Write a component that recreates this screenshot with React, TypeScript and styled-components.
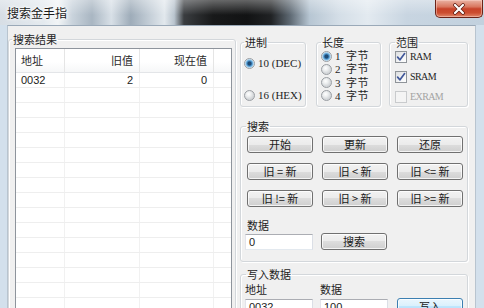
import React from "react";
import styled, { createGlobalStyle, css } from "styled-components";

const CJK = `"Noto Sans CJK SC", "Noto Sans", sans-serif`;
const LATIN_SERIF = `"Liberation Serif", "Noto Sans CJK SC", serif`;
const LATIN_SANS = `"Liberation Sans", "Noto Sans CJK SC", sans-serif`;

const Global = createGlobalStyle`
  html, body { margin: 0; padding: 0; background: #ffffff; }
  body { width: 484px; height: 308px; overflow: hidden; font-family: ${CJK}; }
  * { box-sizing: border-box; }
`;

const Window = styled.div`
  width: 484px;
  height: 308px;
  display: flex;
  flex-direction: column;
  overflow: hidden;
  background: #d3e0ec;
`;

const TitleBar = styled.div`
  height: 25px;
  flex: none;
  display: flex;
  align-items: flex-start;
  justify-content: space-between;
  padding-left: 7px;
  background:
    linear-gradient(180deg, rgba(255,255,255,0.35) 0%, rgba(255,255,255,0) 60%),
    linear-gradient(90deg,
      #d7dee5 0%, #e4eaef 9%, #f1f4f6 12%, #c9d3dc 15%, #a9b6c2 19%,
      #d8e0e7 23%, #9eacb9 27%, #c5cfd8 31%, #e2e8ed 34%, #b9c4ce 36%,
      #3a3d40 38%, #18191a 44%, #121314 51%, #202224 56%, #5f6a74 60%,
      #b7c6d3 64%, #d4dee7 70%, #e3eaf0 76%, #c8d5e1 84%, #c2d1de 100%);
`;

const Title = styled.div`
  font: 12px/12px ${CJK};
  height: 12px;
  color: #1a1a1a;
  margin-top: 7px;
  text-shadow: 0 0 5px #ffffff, 0 0 3px #ffffff, 0 0 2px #ffffff;
`;

const CloseButton = styled.div`
  width: 48px;
  height: 18px;
  margin-right: 1px;
  border: 1px solid #6b2318;
  border-top: none;
  border-radius: 0 0 5px 5px;
  background: linear-gradient(180deg, #eab3a4 0%, #d9775f 40%, #c7432a 52%, #cc4d30 75%, #e0876a 100%);
  box-shadow: inset 0 0 0 1px rgba(255, 220, 210, 0.45);
  display: flex;
  align-items: center;
  justify-content: center;
`;

const Frame = styled.div`
  flex: 1;
  min-height: 0;
  display: flex;
  padding: 0 8px 0 7px;
`;

const Client = styled.div`
  flex: 1;
  min-height: 0;
  background: #f0f0f0;
  border-top: 1px solid #9aa9b8;
  border-left: 1px solid #b8c4cf;
  border-right: 1px solid #b8c4cf;
  display: grid;
  grid-template-columns: 228px 228px;
  column-gap: 4px;
  align-items: start;
  padding: 7px 7px 0 0;
  overflow: hidden;
`;

const Group = styled.fieldset`
  margin: 0;
  min-width: 0;
  border: 1px solid #d3d7db;
  border-radius: 3px;
  box-shadow: inset 1px 1px 0 #ffffff, 1px 1px 0 #ffffff;
  padding: 0 4px 0 4px;
`;

const Legend = styled.legend<{ $shift?: number }>`
  font: 11px/12px ${CJK};
  height: 12px;
  color: #1e1e1e;
  padding: 0 1px;
  margin-left: ${(p) => p.$shift ?? 1}px;
`;

/* ---------- left: list view ---------- */

const ResultGroup = styled(Group)`
  height: 300px;
  padding: 3px 4px 0 6px;
`;

const ListView = styled.div`
  width: 217px;
  height: 270px;
  background: #ffffff;
  border: 1px solid #8e949c;
  display: flex;
  flex-direction: column;
  overflow: hidden;
`;

const COLS = "49px 75px 74px 1fr";

const HeaderRow = styled.div`
  height: 24px;
  flex: none;
  display: grid;
  grid-template-columns: ${COLS};
  background: linear-gradient(180deg, #ffffff 0%, #ffffff 55%, #f6f7f8 100%);
  border-bottom: 1px solid #e3e5e8;
`;

const HeaderCell = styled.div<{ $right?: boolean }>`
  font: 11px/23px ${CJK};
  color: #2b2b2b;
  border-right: 1px solid #e5e5e5;
  padding: 0 ${(p) => (p.$right ? "6px" : "0")} 0 ${(p) => (p.$right ? "0" : "5px")};
  text-align: ${(p) => (p.$right ? "right" : "left")};
  &:last-child { border-right: none; }
`;

const Row = styled.div`
  height: 15px;
  flex: none;
  display: grid;
  grid-template-columns: ${COLS};
  border-bottom: 1px solid #eeeeee;
`;

const Cell = styled.div<{ $right?: boolean }>`
  font: 11px/14px ${LATIN_SANS};
  color: #1c1c1c;
  border-right: 1px solid #f1f1f1;
  text-align: ${(p) => (p.$right ? "right" : "left")};
  padding: 0 ${(p) => (p.$right ? "6px" : "0")} 0 ${(p) => (p.$right ? "0" : "5px")};
  &:last-child { border-right: none; }
`;

/* ---------- right column ---------- */

const RightColumn = styled.div`
  display: flex;
  flex-direction: column;
  padding-top: 3px;
`;

const TopRow = styled.div`
  display: flex;
  align-items: stretch;
  height: 71px;
`;

const SmallGroup = styled(Group)<{ $w: number; $gap: number; $pl: number }>`
  width: ${(p) => p.$w}px;
  margin-right: ${(p) => p.$gap}px;
  padding: 0 2px 0 ${(p) => p.$pl}px;
  display: flex;
  flex-direction: column;
`;

const OptionList = styled.div<{ $gap: number; $top: number }>`
  display: flex;
  flex-direction: column;
  gap: ${(p) => p.$gap}px;
  padding-top: ${(p) => p.$top}px;
`;

const OptionRow = styled.div<{ $disabled?: boolean }>`
  display: flex;
  align-items: center;
  gap: 3px;
  height: 12px;
  color: ${(p) => (p.$disabled ? "#a3a3a3" : "#1e1e1e")};
`;

const RadioCircle = styled.span<{ $on?: boolean }>`
  width: 11px;
  height: 11px;
  flex: none;
  border-radius: 50%;
  border: 1px solid #9a9ea3;
  background: ${(p) =>
    p.$on
      ? "radial-gradient(circle at 50% 50%, #1f4b74 0 1.6px, #3f86bf 2.4px, #8cc4ea 3.6px, #e6eef4 4.6px)"
      : "radial-gradient(circle at 40% 35%, #ffffff 0, #eceeef 2.5px, #d3d6d9 5px)"};
`;

const CheckBox = styled.span<{ $disabled?: boolean }>`
  width: 12px;
  height: 12px;
  flex: none;
  display: flex;
  align-items: center;
  justify-content: center;
  border: 1px solid ${(p) => (p.$disabled ? "#c9cbcd" : "#8f9499")};
  background: ${(p) =>
    p.$disabled ? "#f4f4f4" : "linear-gradient(135deg, #dcdee0 0%, #f3f4f5 60%, #ffffff 100%)"};
`;

const SerifLabel = styled.span<{ $tight?: boolean }>`
  display: block;
  height: 12px;
  font: 11px/12px ${LATIN_SERIF};
  white-space: nowrap;
  ${(p) => p.$tight && css`font-size: 10px; letter-spacing: -0.6px;`}
`;

const NumLabel = styled.span`
  display: block;
  height: 12px;
  font: 11px/12px ${LATIN_SERIF};
  width: 8px;
`;

const CjkLabel = styled.span`
  display: block;
  height: 12px;
  font: 11px/12px ${LATIN_SERIF};
  letter-spacing: 0.5px;
  white-space: nowrap;
`;

const SearchGroup = styled(Group)`
  margin-top: 13px;
  padding: 4px 4px 11px 4px;
  display: flex;
  flex-direction: column;
`;

const ButtonGrid = styled.div`
  display: grid;
  grid-template-columns: repeat(3, 66px);
  column-gap: 9px;
  row-gap: 10px;
  padding-left: 2px;
`;

const PushButton = styled.button<{ $hot?: boolean }>`
  height: 17px;
  border-radius: 3px;
  font: 11px/15px ${CJK};
  color: #1a1a1a;
  text-align: center;
  white-space: pre;
  padding: 0;
  border: 1px solid ${(p) => (p.$hot ? "#3c7fb1" : "#707070")};
  background: ${(p) =>
    p.$hot
      ? "linear-gradient(180deg, #eaf6fd 0%, #d9f0fc 50%, #bee6fd 50%, #a7d9f5 100%)"
      : "linear-gradient(180deg, #f2f2f2 0%, #ebebeb 50%, #dddddd 50%, #cfcfcf 100%)"};
  box-shadow: inset 0 0 0 1px rgba(255, 255, 255, 0.75);
`;

const FieldLabel = styled.div`
  font: 11px/12px ${CJK};
  height: 12px;
  color: #1e1e1e;
  padding-left: 2px;
`;

const DataBlock = styled.div`
  margin-top: 12px;
  display: flex;
  flex-direction: column;
  gap: 2px;
`;

const DataRow = styled.div`
  display: grid;
  grid-template-columns: 76px 66px;
  align-items: center;
`;

const TextBox = styled.div`
  width: 68px;
  height: 16px;
  background: #ffffff;
  border: 1px solid;
  border-color: #abadb3 #dbdfe6 #e3e9ef #e2e3ea;
  font: 11px/14px ${LATIN_SANS};
  color: #1c1c1c;
  padding-left: 3px;
`;

const WriteGroup = styled(Group)`
  margin-top: 6px;
  height: 60px;
  padding: 3px 4px 0 4px;
`;

const WriteGrid = styled.div`
  display: grid;
  grid-template-columns: 75px 77px 66px;
  row-gap: 3px;
  align-items: end;
`;

const WriteLabel = styled.div`
  font: 11px/12px ${CJK};
  height: 12px;
  color: #1e1e1e;
`;

const rows = Array.from({ length: 16 });

const Check = () => (
  <svg width="10" height="10" viewBox="0 0 10 10">
    <path d="M1.6 5.2 L4 7.8 L8.6 1.6" fill="none" stroke="#41589a" strokeWidth="1.7" strokeLinecap="round" strokeLinejoin="round" />
  </svg>
);

export default function App() {
  return (
    <Window>
      <Global />
      <TitleBar>
        <Title>搜索金手指</Title>
        <CloseButton>
          <svg width="14" height="12" viewBox="0 0 14 12">
            <path d="M3 2 L11 10 M11 2 L3 10" stroke="#5a1a10" strokeWidth="3.6" strokeLinecap="round" />
            <path d="M3 2 L11 10 M11 2 L3 10" stroke="#ffffff" strokeWidth="2.2" strokeLinecap="round" />
          </svg>
        </CloseButton>
      </TitleBar>
      <Frame>
        <Client>
          <ResultGroup>
            <Legend $shift={-3}>搜索结果</Legend>
            <ListView>
              <HeaderRow>
                <HeaderCell>地址</HeaderCell>
                <HeaderCell $right>旧值</HeaderCell>
                <HeaderCell $right>现在值</HeaderCell>
                <HeaderCell />
              </HeaderRow>
              {rows.map((_, i) => (
                <Row key={i}>
                  <Cell>{i === 0 ? "0032" : ""}</Cell>
                  <Cell $right>{i === 0 ? "2" : ""}</Cell>
                  <Cell $right>{i === 0 ? "0" : ""}</Cell>
                  <Cell />
                </Row>
              ))}
            </ListView>
          </ResultGroup>

          <RightColumn>
            <TopRow>
              <SmallGroup $w={66} $gap={10} $pl={3}>
                <Legend $shift={0}>进制</Legend>
                <OptionList $gap={20} $top={9}>
                  <OptionRow>
                    <RadioCircle $on />
                    <SerifLabel>10 (DEC)</SerifLabel>
                  </OptionRow>
                  <OptionRow>
                    <RadioCircle />
                    <SerifLabel>16 (HEX)</SerifLabel>
                  </OptionRow>
                </OptionList>
              </SmallGroup>
              <SmallGroup $w={65} $gap={8} $pl={4}>
                <Legend $shift={0}>长度</Legend>
                <OptionList $gap={1.3} $top={2}>
                  {["1", "2", "3", "4"].map((n, i) => (
                    <OptionRow key={n}>
                      <RadioCircle $on={i === 0} />
                      <NumLabel>{n}</NumLabel>
                      <CjkLabel>字节</CjkLabel>
                    </OptionRow>
                  ))}
                </OptionList>
              </SmallGroup>
              <SmallGroup $w={79} $gap={0} $pl={5}>
                <Legend $shift={0}>范围</Legend>
                <OptionList $gap={8} $top={3}>
                  <OptionRow>
                    <CheckBox><Check /></CheckBox>
                    <SerifLabel $tight>RAM</SerifLabel>
                  </OptionRow>
                  <OptionRow>
                    <CheckBox><Check /></CheckBox>
                    <SerifLabel $tight>SRAM</SerifLabel>
                  </OptionRow>
                  <OptionRow $disabled>
                    <CheckBox $disabled />
                    <SerifLabel $tight>EXRAM</SerifLabel>
                  </OptionRow>
                </OptionList>
              </SmallGroup>
            </TopRow>

            <SearchGroup>
              <Legend>搜索</Legend>
              <ButtonGrid>
                <PushButton>开始</PushButton>
                <PushButton>更新</PushButton>
                <PushButton>还原</PushButton>
                <PushButton>{"旧 = 新"}</PushButton>
                <PushButton>{"旧 < 新"}</PushButton>
                <PushButton>{"旧 <= 新"}</PushButton>
                <PushButton>{"旧 != 新"}</PushButton>
                <PushButton>{"旧 > 新"}</PushButton>
                <PushButton>{"旧 >= 新"}</PushButton>
              </ButtonGrid>
              <DataBlock>
                <FieldLabel>数据</FieldLabel>
                <DataRow>
                  <TextBox>0</TextBox>
                  <PushButton>搜索</PushButton>
                </DataRow>
              </DataBlock>
            </SearchGroup>

            <WriteGroup>
              <Legend>写入数据</Legend>
              <WriteGrid>
                <WriteLabel>地址</WriteLabel>
                <WriteLabel>数据</WriteLabel>
                <span />
                <TextBox>0032</TextBox>
                <TextBox>100</TextBox>
                <PushButton $hot>写入</PushButton>
              </WriteGrid>
            </WriteGroup>
          </RightColumn>
        </Client>
      </Frame>
    </Window>
  );
}
